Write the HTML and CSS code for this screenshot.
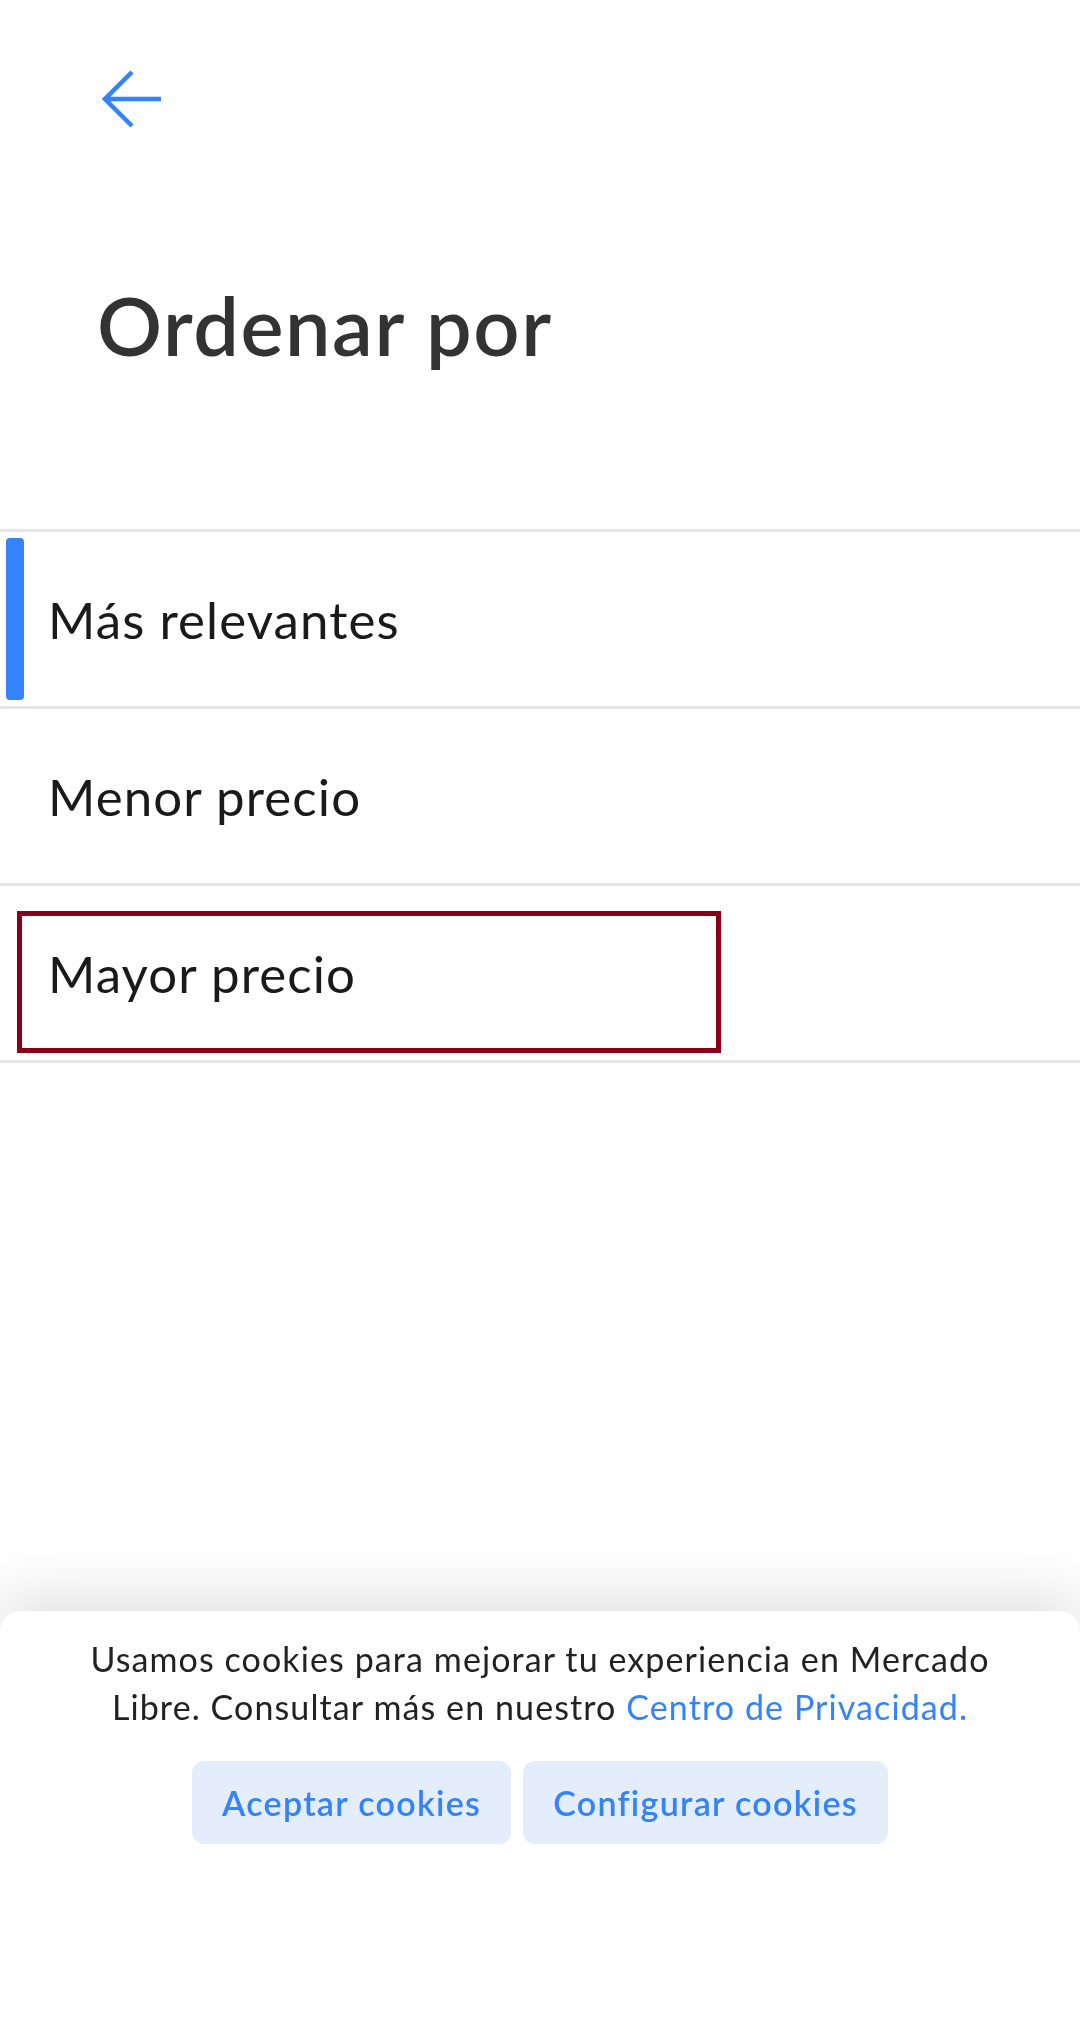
FILE: index.html
```html
<!DOCTYPE html>
<html lang="es">
<head>
<meta charset="utf-8">
<title>Ordenar por</title>
<link rel="stylesheet" href="styles.css">
</head>
<body>
<div class="page">
  <header class="header">
    <a class="back" href="#" aria-label="Volver">
      <svg class="back-icon" viewBox="0 0 60 60" width="60" height="60" aria-hidden="true">
        <path d="M30 3 L3 30 L30 57 M3 30 H59" fill="none" stroke="#3483fa" stroke-width="4.5" stroke-linejoin="miter"/>
      </svg>
    </a>
    <h1 class="title">Ordenar por</h1>
  </header>

  <ul class="options">
    <li class="option option--selected"><span class="indicator"></span>Más relevantes</li>
    <li class="option">Menor precio</li>
    <li class="option"><span class="focus-box"></span>Mayor precio</li>
  </ul>
</div>

<div class="cookie-banner">
  <p class="cookie-text">Usamos cookies para mejorar tu experiencia en Mercado Libre. Consultar más en nuestro <a href="#" class="cookie-link">Centro de Privacidad.</a></p>
  <div class="cookie-actions">
    <button class="cookie-btn">Aceptar cookies</button>
    <button class="cookie-btn">Configurar cookies</button>
  </div>
</div>
</body>
</html>
```
FILE: styles.css
```css
* { box-sizing: border-box; }

html, body {
  margin: 0;
  padding: 0;
  background: #ffffff;
}

body {
  font-family: Lato, "Noto Sans", sans-serif;
  color: #1a1a1a;
}

.page {
  min-height: 2037px;
}

.header {
  padding: 69px 0 0 0;
}

.back {
  display: block;
  width: 60px;
  height: 60px;
  margin-left: 102px;
}

.back-icon {
  display: block;
}

.title {
  margin: 147px 0 0 0;
  padding-left: 97px;
  font-size: 81px;
  line-height: 97px;
  font-weight: 600;
  color: #333333;
  letter-spacing: 1.6px;
}

.options {
  list-style: none;
  margin: 156px 0 0 0;
  padding: 0;
}

.option {
  position: relative;
  display: flex;
  align-items: center;
  height: 177px;
  border-top: 3px solid #e6e6e6;
  padding-left: 48px;
  font-size: 51px;
  letter-spacing: 1.1px;
  color: #1a1a1a;
}

.option:last-child {
  height: 180px;
  border-bottom: 3px solid #e6e6e6;
}

.indicator {
  position: absolute;
  left: 6px;
  top: 6px;
  bottom: 6px;
  width: 18px;
  border-radius: 4px;
  background: #3483fa;
}

.focus-box {
  position: absolute;
  left: 17px;
  top: 25px;
  width: 704px;
  height: 142px;
  border: 5px solid #8a0018;
}

.cookie-banner {
  position: fixed;
  left: 0;
  right: 0;
  bottom: 0;
  height: 426px;
  background: #ffffff;
  border-radius: 20px 20px 0 0;
  box-shadow: 0 -16px 60px rgba(0, 0, 0, 0.12);
  padding: 24px 50px 0 50px;
  text-align: center;
}

.cookie-text {
  margin: 0 auto;
  max-width: 960px;
  font-size: 34px;
  line-height: 48px;
  color: #222222;
  letter-spacing: 1.1px;
}

.cookie-link {
  color: #3483fa;
  text-decoration: none;
}

.cookie-actions {
  display: flex;
  justify-content: center;
  gap: 12px;
  margin-top: 30px;
}

.cookie-btn {
  height: 83px;
  padding: 0 30px;
  border: none;
  border-radius: 12px;
  background: #e3edfb;
  color: #3483fa;
  font-family: Lato, "Noto Sans", sans-serif;
  font-size: 34px;
  font-weight: 600;
  letter-spacing: 1.3px;
}
```
